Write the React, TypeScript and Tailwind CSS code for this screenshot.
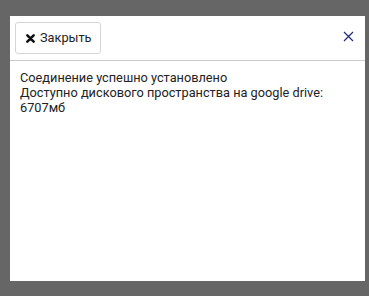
export default function App() {
  return (
    <div className="w-[369px] h-[296px] bg-[#666666] pt-4 pl-[10px] pr-1 pb-[15px] font-['Roboto',sans-serif]">
      <div className="w-[355px] h-[265px] bg-white flex flex-col">
        <div className="flex items-start justify-between pt-[6px] pl-[5px] pr-[11px] h-[45px] border-b border-[#cccccc]">
          <button className="flex items-center gap-[5px] h-8 w-[86px] pl-[10px] border border-[#d6d6d6] rounded-[3px] bg-white text-[12.75px] text-[#222222]">
            <svg width="9" height="9" viewBox="0 0 10 10" className="shrink-0">
              <path d="M1.5 1.5 L8.5 8.5 M8.5 1.5 L1.5 8.5" stroke="#111111" strokeWidth="2.8" strokeLinecap="round" />
            </svg>
            <span>Закрыть</span>
          </button>
          <svg width="11" height="11" viewBox="0 0 11 11" className="mt-[9px]">
            <path d="M1 1 L10 10 M10 1 L1 10" stroke="#1f2a7a" strokeWidth="1.2" />
          </svg>
        </div>
        <div className="pl-[10px] pt-[9px] text-[12.75px] leading-[15px] text-[#222222]">
          <p>Соединение успешно установлено</p>
          <p>Доступно дискового пространства на google drive:</p>
          <p>6707мб</p>
        </div>
      </div>
    </div>
  );
}
